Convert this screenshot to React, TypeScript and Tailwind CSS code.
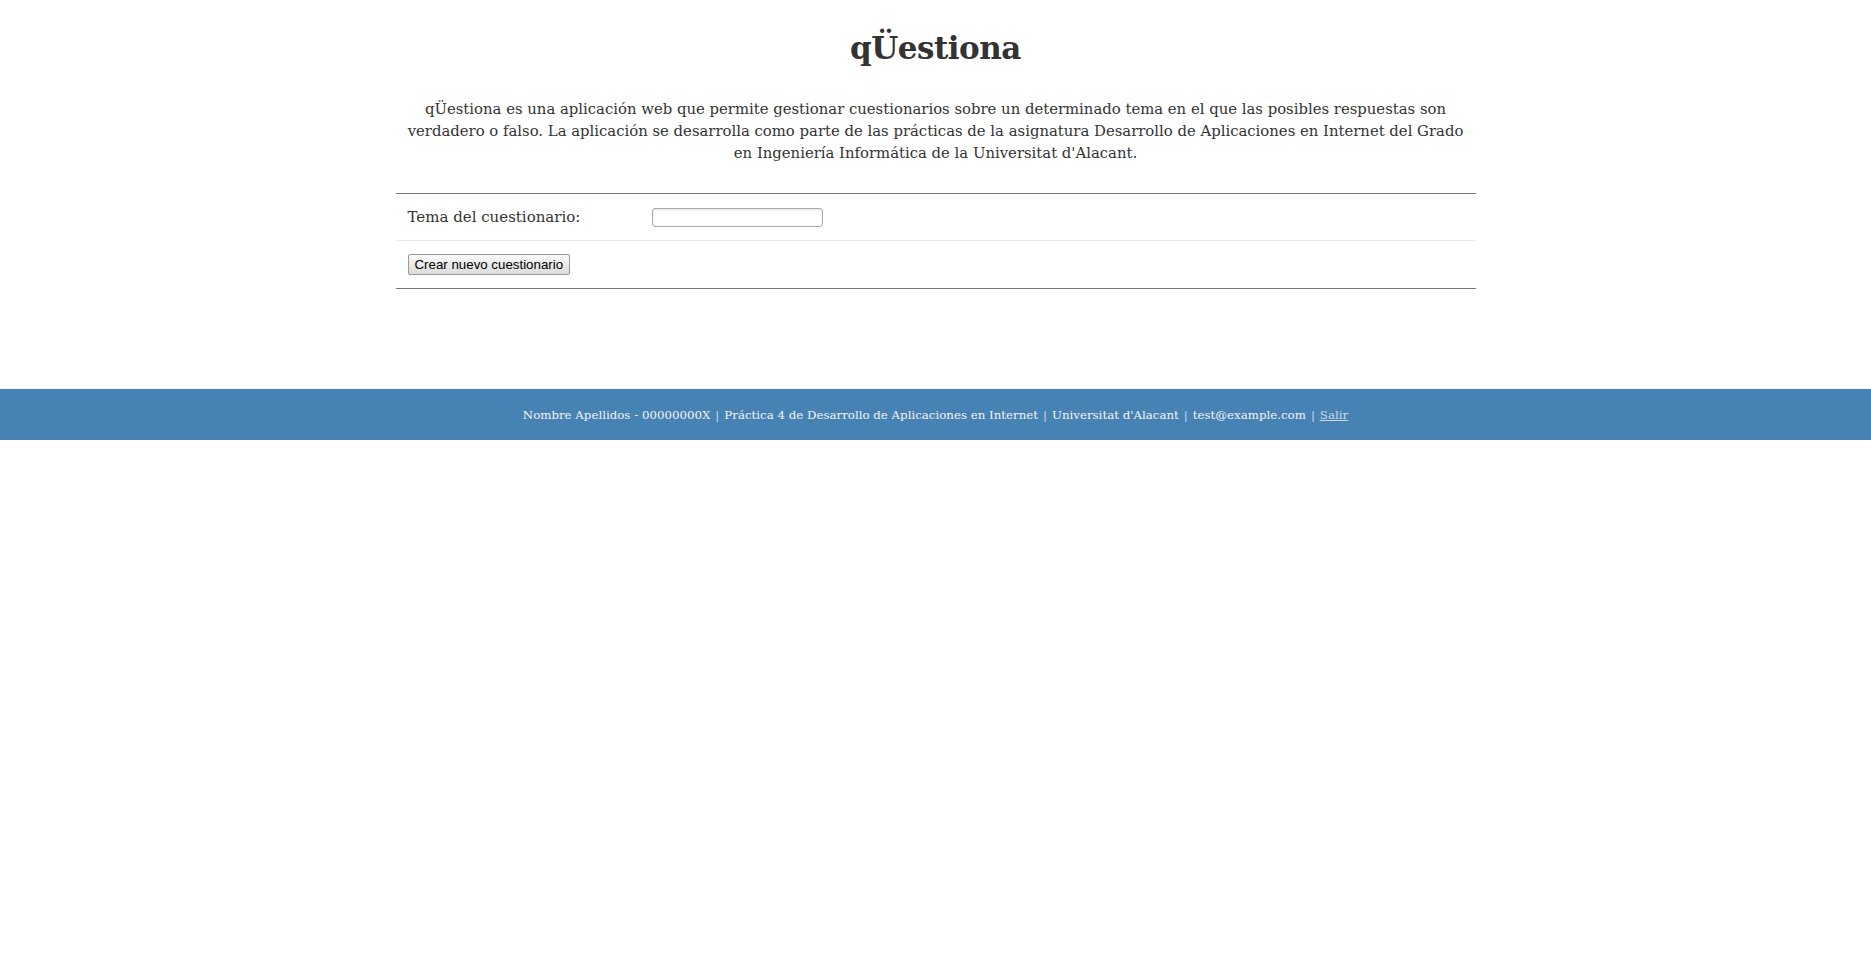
import React from 'react';

const App = () => {
  const [tema, setTema] = React.useState('');

  return (
    <div className="min-h-screen bg-white text-[#333] font-['DejaVu_Serif',serif]">
      <main className="mx-auto w-[1080px]">
        <h1 className="pt-[26px] text-center text-[31px] font-bold leading-[44px] tracking-[-0.5px]">qÜestiona</h1>
        <p className="mt-[28px] text-center text-[14.85px] leading-[22px]">
          qÜestiona es una aplicación web que permite gestionar cuestionarios sobre un determinado tema en el que las posibles respuestas son
          <br />
          verdadero o falso. La aplicación se desarrolla como parte de las prácticas de la asignatura Desarrollo de Aplicaciones en Internet del Grado
          <br />
          en Ingeniería Informática de la Universitat d'Alacant.
        </p>

        <form
          className="mt-[29px] border-y border-[#777]"
          onSubmit={(e) => e.preventDefault()}
        >
          <div className="flex h-[47px] items-center border-b border-[#e8e8e8] px-[12px]">
            <label htmlFor="tema" className="w-[244px] text-[15px]">Tema del cuestionario:</label>
            <input
              id="tema"
              value={tema}
              onChange={(e) => setTema(e.target.value)}
              className="h-[19px] w-[171px] rounded-[3px] border border-[#aaa] bg-white shadow-[inset_0_1px_2px_rgba(0,0,0,0.12)]"
            />
          </div>
          <div className="flex h-[47px] items-center px-[12px]">
            <button
              type="submit"
              className="h-[21px] rounded-[2px] border border-[#999] bg-gradient-to-b from-[#fafafa] to-[#dcdcdc] px-[6px] font-['Liberation_Sans',sans-serif] text-[13.3px] leading-none text-black"
            >
              Crear nuevo cuestionario
            </button>
          </div>
        </form>
      </main>

      <footer className="mt-[100px] flex h-[51px] items-center justify-center bg-[#4682b4] pt-[3px] text-[11.8px] text-[#f4f4f4]">
        <span>Nombre Apellidos - 00000000X</span>
        <span className="mx-[5px] text-[#c8d8e8]">|</span>
        <span>Práctica 4 de Desarrollo de Aplicaciones en Internet</span>
        <span className="mx-[5px] text-[#c8d8e8]">|</span>
        <span>Universitat d'Alacant</span>
        <span className="mx-[5px] text-[#c8d8e8]">|</span>
        <span>test@example.com</span>
        <span className="mx-[5px] text-[#c8d8e8]">|</span>
        <a href="#" className="text-[#cfd8e0] underline">Salir</a>
      </footer>
    </div>
  );
};

export default App;
